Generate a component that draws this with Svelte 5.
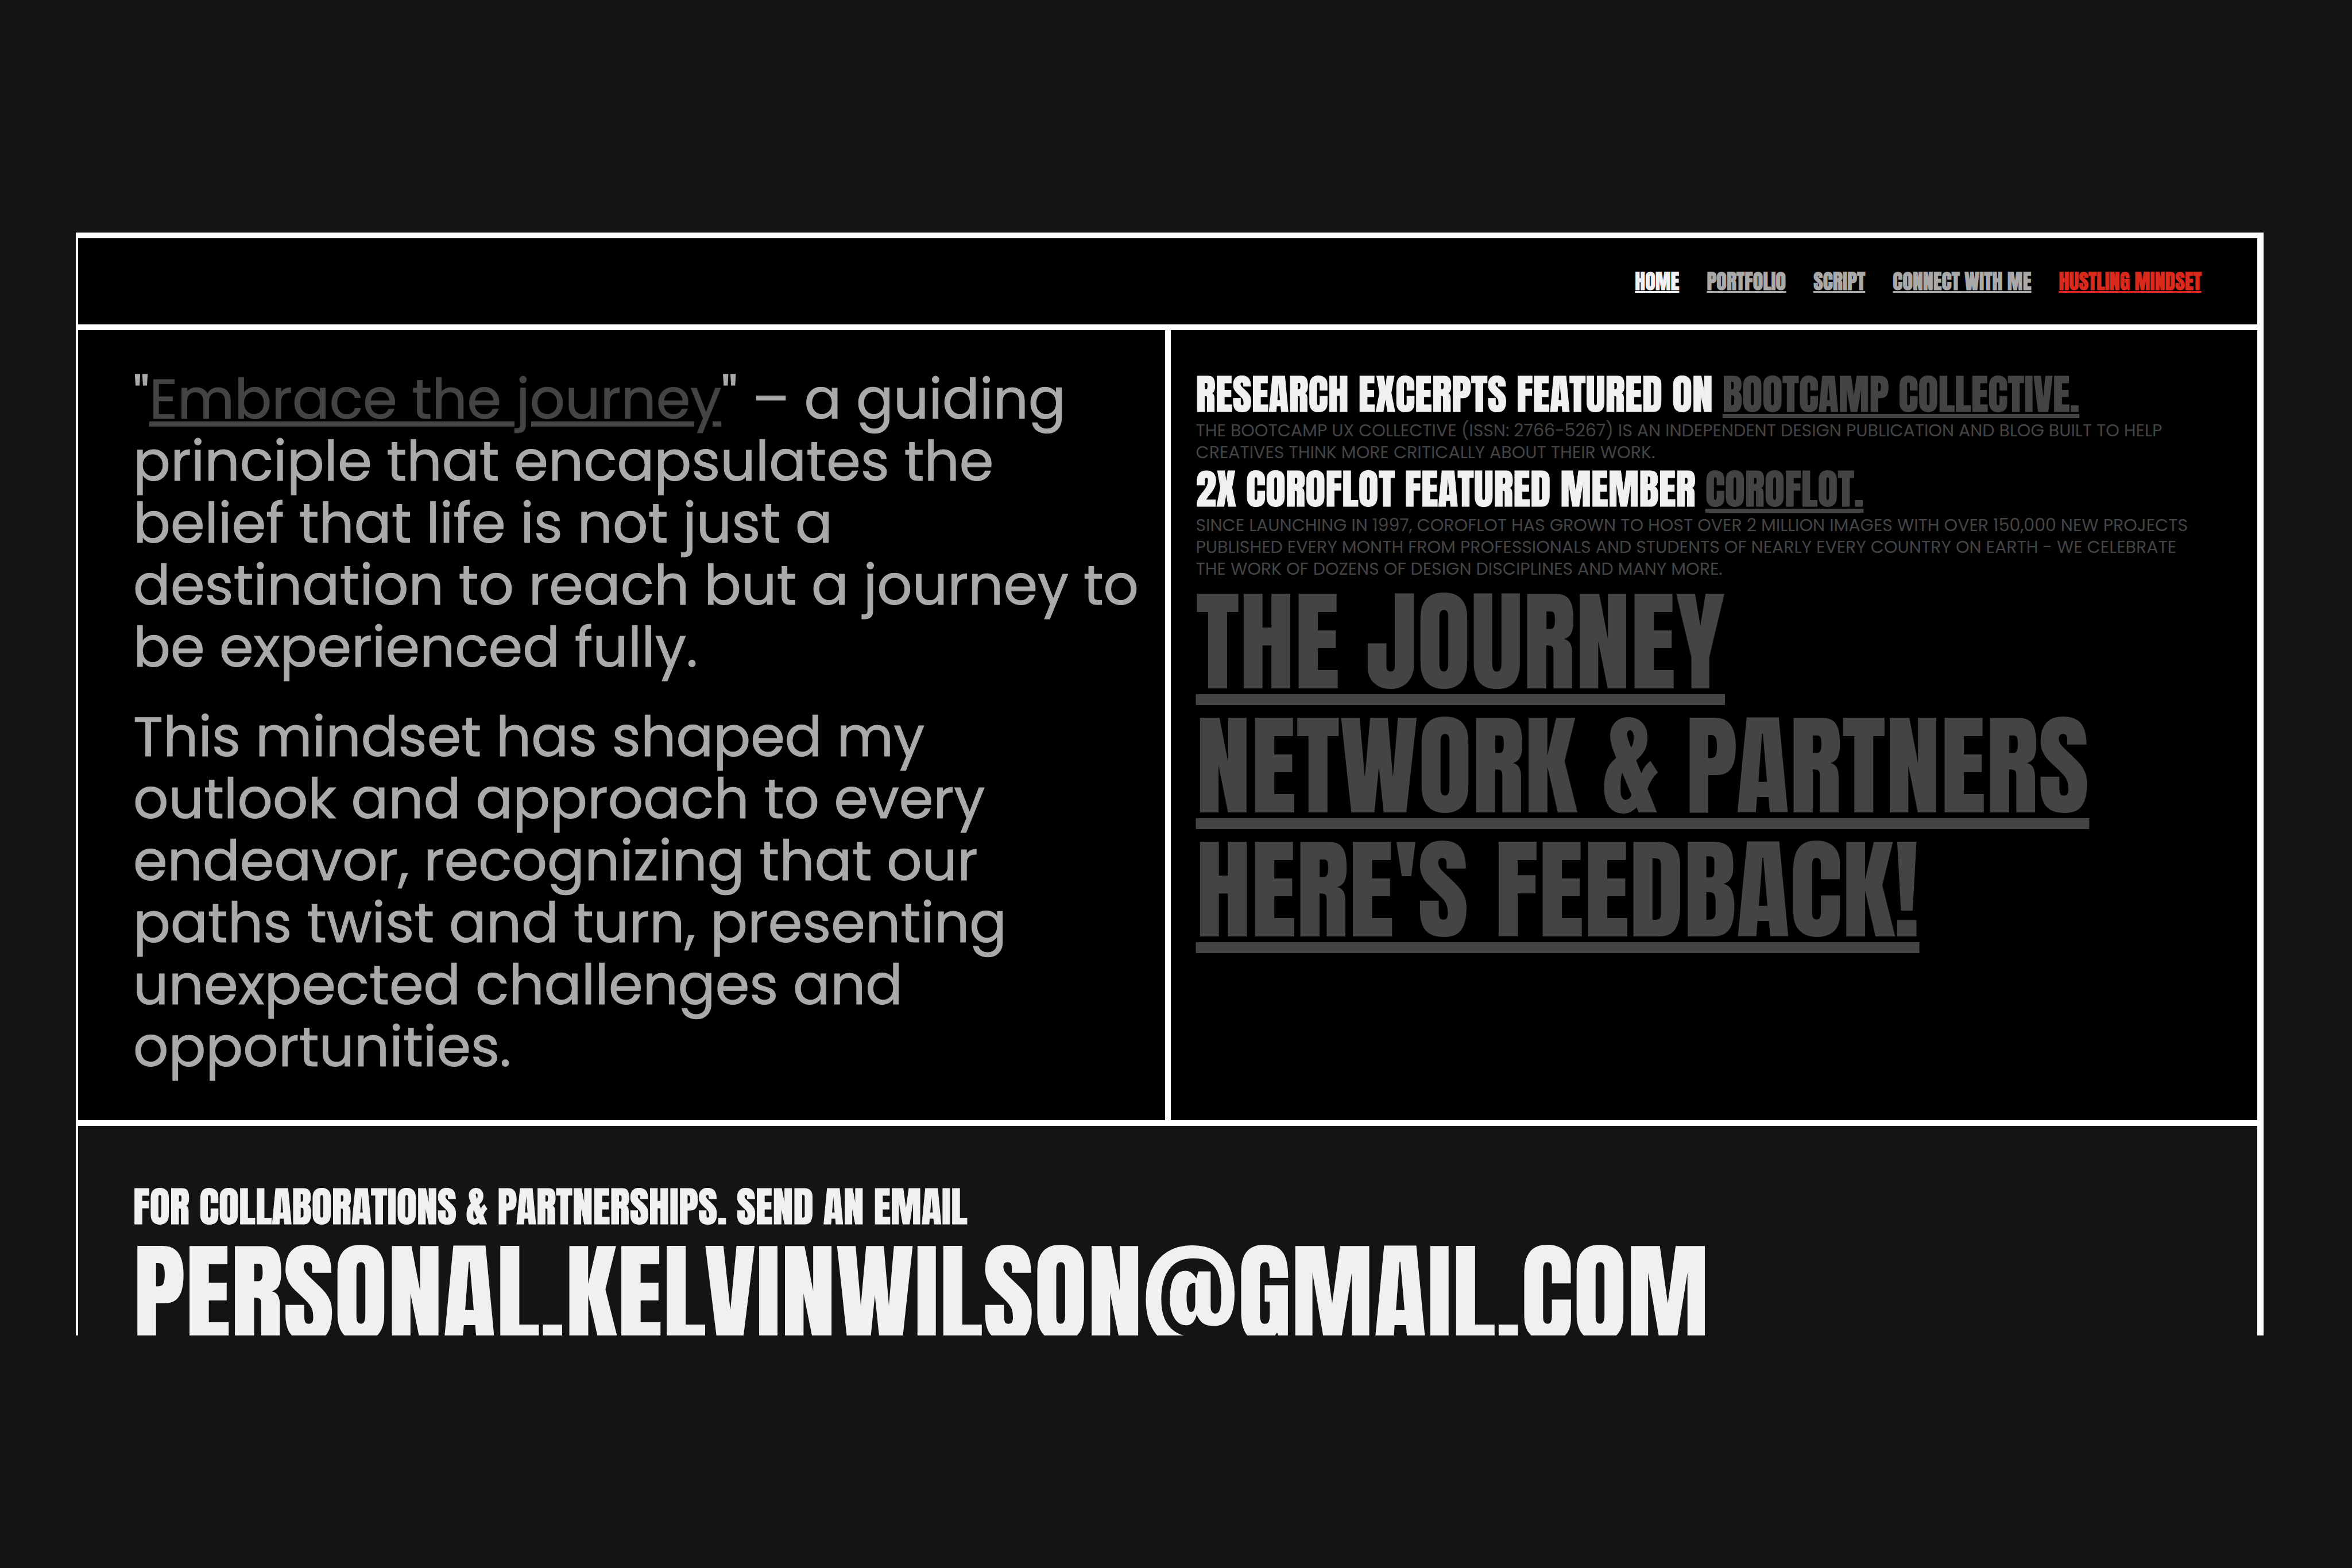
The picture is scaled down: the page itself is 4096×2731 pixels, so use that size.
<script>
  const nav = [
    { label: 'Home', tone: 'current' },
    { label: 'Portfolio', tone: '' },
    { label: 'Script', tone: '' },
    { label: 'Connect with me', tone: '' },
    { label: 'Hustling mindset', tone: 'accent' }
  ];
  const features = [
    {
      title: 'Research excerpts featured on',
      link: 'Bootcamp Collective.',
      text: 'The Bootcamp UX Collective (ISSN: 2766-5267) is an independent design publication and blog built to help creatives think more critically about their work.'
    },
    {
      title: '2x Coroflot featured member',
      link: 'Coroflot.',
      text: 'Since launching in 1997, Coroflot has grown to host over 2 million images with over 150,000 new projects published every month from professionals and students of nearly every country on earth - we celebrate the work of dozens of design disciplines and many more.'
    }
  ];
  const sections = ['The journey', 'Network & partners', "Here's feedback!"];
</script>

<div class="page">
  <div class="frame">
    <header>
      <nav aria-label="Main">
        {#each nav as item}
          <a href="#top" class={item.tone}>{item.label}</a>
        {/each}
      </nav>
    </header>

    <main>
      <section class="quote">
        <p>"<a href="#journey">Embrace the journey</a>" – a guiding principle that encapsulates the belief that life is not just a destination to reach but a journey to be experienced fully.</p>
        <p>This mindset has shaped my outlook and approach to every endeavor, recognizing that our paths twist and turn, presenting unexpected challenges and opportunities.</p>
      </section>

      <section class="features">
        {#each features as f}
          <h2>{f.title} <a href="#feature">{f.link}</a></h2>
          <p>{f.text}</p>
        {/each}
        <ul>
          {#each sections as s}
            <li><a href="#section">{s}</a></li>
          {/each}
        </ul>
      </section>
    </main>

    <footer>
      <h2>For collaborations & partnerships. Send an email</h2>
      <p>personal.kelvinwilson@gmail.com</p>
    </footer>
  </div>
</div>

<style>
  :global(body) {
    background: #141414;
  }
  .page {
    --line: #fff;
    --bright: #f0f0f2;
    --mid: #aaa;
    --dim: #444446;
    box-sizing: border-box;
    height: 100vh;
    padding: 405px 154px 405px 132px;
    display: flex;
    flex-direction: column;
    background: #141414;
    color: var(--bright);
    font-family: Anton, "Roboto Condensed", sans-serif;
    font-weight: 400;
  }
  .frame {
    flex: 1;
    min-height: 0;
    overflow: hidden;
    border: solid var(--line);
    border-width: 10px 11px 0 4px;
  }
  header {
    display: flex;
    align-items: center;
    justify-content: flex-end;
    height: 150px;
    padding: 0 97px;
    background: #000;
    border-bottom: 10px solid var(--line);
  }
  nav {
    display: flex;
    gap: 48px;
    font-size: 36px;
    line-height: 54px;
    text-transform: uppercase;
  }
  nav,
  h2,
  .quote {
    -webkit-text-stroke: 1px currentColor;
  }
  a {
    -webkit-text-stroke-color: currentColor;
  }
  nav a {
    color: var(--mid);
  }
  nav a.current {
    color: var(--bright);
  }
  nav a.accent {
    color: #db291b;
  }
  main {
    display: grid;
    grid-template-columns: 1fr 1fr;
    gap: 10px;
    background: var(--line);
    border-bottom: 10px solid var(--line);
  }
  section {
    background: #000;
  }
  section a {
    color: var(--dim);
  }
  .quote {
    padding: 67px 40px 73px 96px;
    color: var(--mid);
    font-family: Poppins, "Open Sans", sans-serif;
    font-size: 96px;
    line-height: 108px;
  }
  p {
    margin: 0;
  }
  .quote p + p {
    margin-top: 48px;
  }
  .features {
    padding: 67px 96px 73px 44px;
    text-transform: uppercase;
  }
  h2 {
    margin: 0;
    font-size: 72px;
    line-height: 89px;
    font-weight: 400;
  }
  .features p {
    color: var(--dim);
    font-family: Poppins, "Open Sans", sans-serif;
    font-size: 30px;
    line-height: 38px;
  }
  ul {
    margin: 0;
    padding: 0;
    list-style: none;
    font-size: 192px;
    line-height: 216px;
  }
  footer {
    padding: 96px;
    text-transform: uppercase;
  }
  footer p {
    font-size: 192px;
    line-height: 216px;
  }
</style>
